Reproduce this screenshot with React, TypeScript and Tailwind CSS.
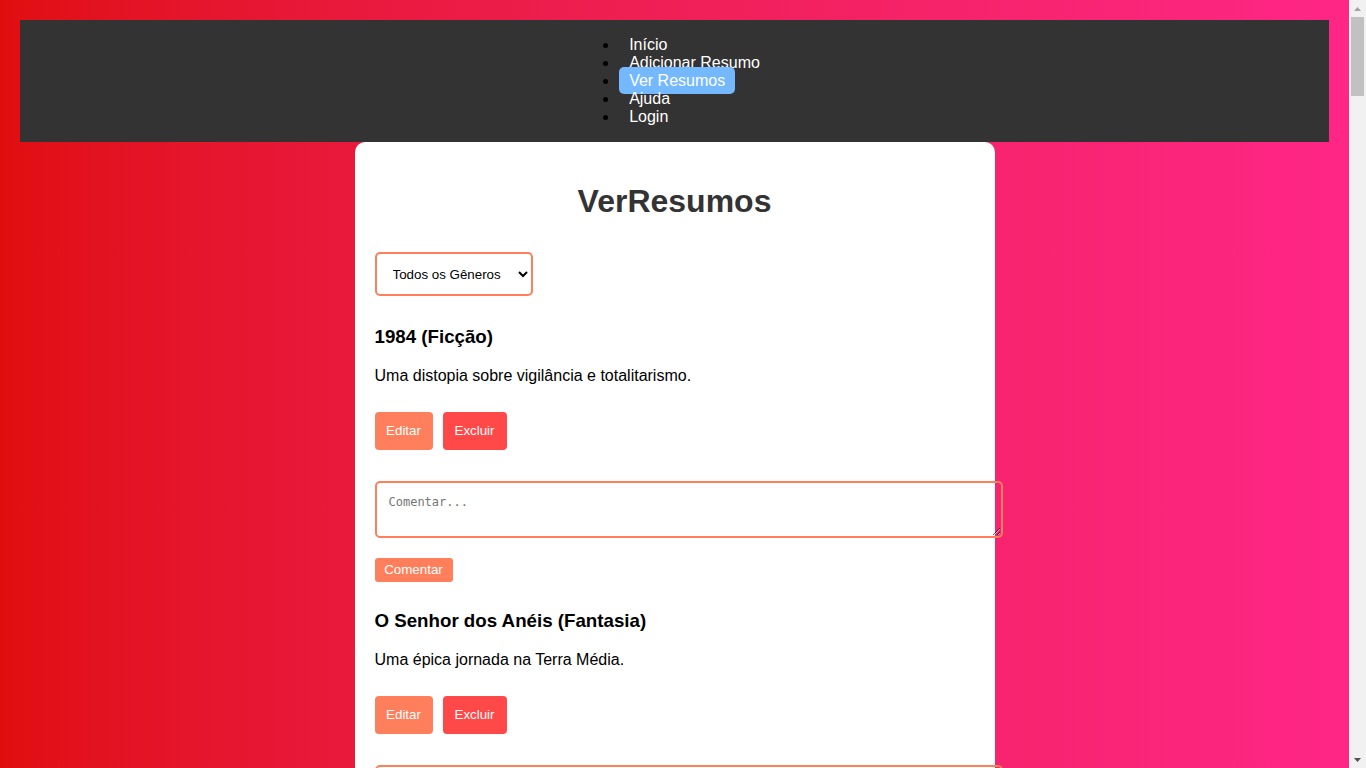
import React from 'react';

const books = [
  { title: '1984', genre: 'Ficção', summary: 'Uma distopia sobre vigilância e totalitarismo.' },
  { title: 'O Senhor dos Anéis', genre: 'Fantasia', summary: 'Uma épica jornada na Terra Média.' },
  { title: 'Dom Casmurro', genre: 'Romance', summary: 'Bentinho e a dúvida eterna sobre Capitu.' },
  { title: 'O Hobbit', genre: 'Fantasia', summary: 'Bilbo parte em uma aventura inesperada.' },
  { title: 'Admirável Mundo Novo', genre: 'Ficção', summary: 'Uma sociedade controlada pelo prazer.' },
  { title: 'O Pequeno Príncipe', genre: 'Infantil', summary: 'Um príncipe viaja entre planetas.' },
  { title: 'Memórias Póstumas de Brás Cubas', genre: 'Romance', summary: 'Um defunto autor conta sua vida.' },
  { title: 'Harry Potter', genre: 'Fantasia', summary: 'Um jovem bruxo descobre seu destino.' },
  { title: 'A Revolução dos Bichos', genre: 'Ficção', summary: 'Animais tomam o controle da fazenda.' },
  { title: 'O Alquimista', genre: 'Romance', summary: 'Santiago busca seu tesouro pessoal.' },
  { title: 'Sapiens', genre: 'História', summary: 'Uma breve história da humanidade.' },
  { title: 'O Cortiço', genre: 'Romance', summary: 'A vida em um cortiço no Rio de Janeiro.' },
  { title: 'Duna', genre: 'Ficção', summary: 'Intrigas políticas no planeta Arrakis.' },
  { title: 'Iracema', genre: 'Romance', summary: 'A lenda da virgem dos lábios de mel.' },
  { title: 'Fahrenheit 451', genre: 'Ficção', summary: 'Um mundo onde os livros são queimados.' },
  { title: 'As Crônicas de Nárnia', genre: 'Fantasia', summary: 'Crianças descobrem um mundo mágico.' },
  { title: 'Grande Sertão: Veredas', genre: 'Romance', summary: 'Riobaldo narra sua vida de jagunço.' },
  { title: 'O Código Da Vinci', genre: 'Suspense', summary: 'Um mistério escondido em obras de arte.' },
  { title: 'Capitães da Areia', genre: 'Romance', summary: 'Meninos de rua nas ruas de Salvador.' },
  { title: 'Orgulho e Preconceito', genre: 'Romance', summary: 'Elizabeth Bennet e o orgulhoso Sr. Darcy.' },
  { title: 'Vidas Secas', genre: 'Romance', summary: 'Uma família foge da seca no sertão.' },
  { title: 'It: A Coisa', genre: 'Terror', summary: 'Um grupo enfrenta um palhaço assustador.' },
  { title: 'Drácula', genre: 'Terror', summary: 'O conde vampiro chega a Londres.' },
  { title: 'O Diário de Anne Frank', genre: 'História', summary: 'O relato de uma jovem escondida na guerra.' },
];

const navItems = ['Início', 'Adicionar Resumo', 'Ver Resumos', 'Ajuda', 'Login'];

function Scrollbar() {
  return (
    <div className="w-[17px] shrink-0 h-screen bg-[#f1f1f1] flex flex-col">
      <div className="h-[17px] flex items-center justify-center">
        <svg width="7" height="4" viewBox="0 0 7 4">
          <polygon points="3.5,0 7,4 0,4" fill="#a3a3a3" />
        </svg>
      </div>
      <div className="mx-[2px] h-[79px] bg-[#c1c1c1]" />
      <div className="flex-1" />
      <div className="h-[17px] flex items-center justify-center">
        <svg width="7" height="4" viewBox="0 0 7 4">
          <polygon points="0,0 7,0 3.5,4" fill="#505050" />
        </svg>
      </div>
    </div>
  );
}

export default function App() {
  return (
    <div className="flex h-screen" style={{ fontFamily: '"Liberation Sans", Arial, sans-serif' }}>
      <div className="flex-1 h-screen overflow-y-auto bg-gradient-to-r from-[#e10e0e] to-[#ff2686]">
        <div className="p-[20px]">
          {/* Header */}
          <header className="bg-[#333333] flex justify-center py-[16px]">
            <ul className="list-disc pl-[40px] text-black text-[16px] leading-[18px]">
              {navItems.map((item) => (
                <li key={item}>
                  <a
                    href="#"
                    className={
                      item === 'Ver Resumos'
                        ? 'text-white px-[10px] py-[5px] rounded-[5px] bg-[#74b9ff]'
                        : 'text-white px-[10px]'
                    }
                  >
                    {item}
                  </a>
                </li>
              ))}
            </ul>
          </header>

          {/* Card */}
          <main className="max-w-[640px] mx-auto bg-white rounded-[10px] p-[20px]">
            <h1 className="mt-[21px] text-center text-[32px] leading-[37px] font-bold text-[#333333]">
              VerResumos
            </h1>

            <select className="mt-[32px] block w-[158px] h-[44px] border-2 border-[#ff7f5c] rounded-[5px] px-[12px] text-[13.33px] text-black bg-white">
              <option>Todos os Gêneros</option>
              <option>Ficção</option>
              <option>Fantasia</option>
              <option>Romance</option>
            </select>

            {books.map((book, i) => (
              <div key={book.title}>
                <h3
                  className={
                    i === 0
                      ? 'mt-[30px] text-[18.72px] leading-[21px] font-bold text-black'
                      : 'mt-[28px] text-[18.72px] leading-[21px] font-bold text-black'
                  }
                >
                  {book.title} ({book.genre})
                </h3>
                <p className="mt-[20px] text-[16px] leading-[18px] text-black">{book.summary}</p>

                <div className="mt-[27px] flex gap-[10px]">
                  <button className="w-[58px] h-[38px] rounded-[4px] bg-[#ff7f5c] text-white text-[13.33px]">
                    Editar
                  </button>
                  <button className="w-[64px] h-[38px] rounded-[4px] bg-[#ff4848] text-white text-[13.33px]">
                    Excluir
                  </button>
                </div>

                <textarea
                  placeholder="Comentar..."
                  className="mt-[31px] block w-[628px] h-[57px] border-2 border-[#ff7f5c] rounded-[5px] px-[12px] py-[12px] text-[12px] leading-[14px] placeholder:text-[#757575]"
                  style={{ fontFamily: '"DejaVu Sans Mono", monospace' }}
                />

                <button className="mt-[20px] block w-[78px] h-[24px] rounded-[3px] bg-[#ff7f5c] text-white text-[13.33px]">
                  Comentar
                </button>
              </div>
            ))}
          </main>
        </div>
      </div>
      <Scrollbar />
    </div>
  );
}
